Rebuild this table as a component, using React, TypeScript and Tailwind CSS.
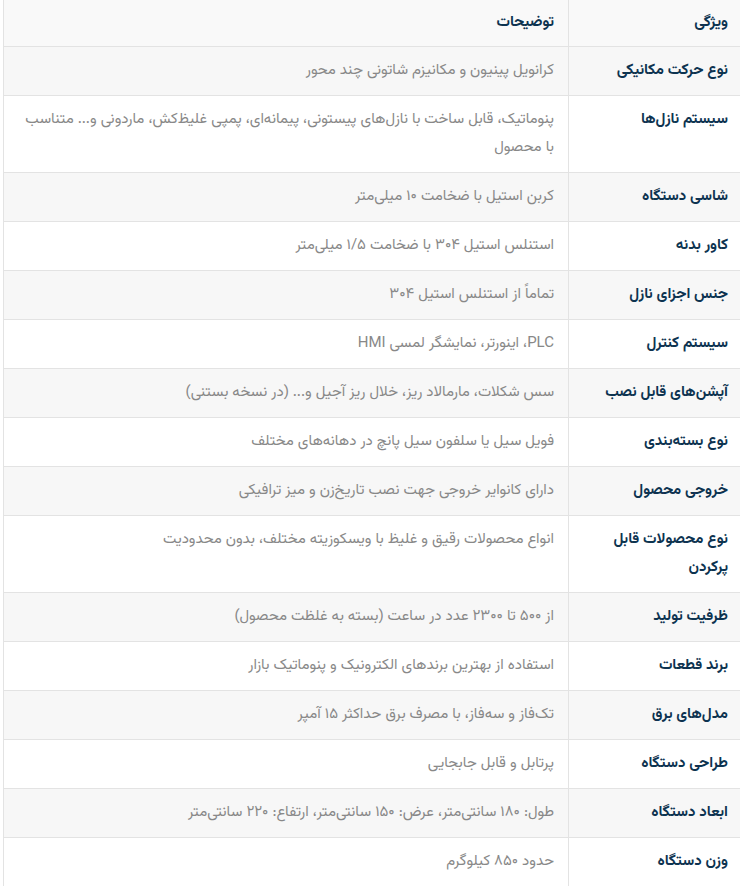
import React from "react";

const rows: [string, string][] = [
  ["نوع حرکت مکانیکی", "کرانویل پینیون و مکانیزم شاتونی چند محور"],
  ["سیستم نازل‌ها", "پنوماتیک، قابل ساخت با نازل‌های پیستونی، پیمانه‌ای، پمپی غلیظ‌کش، ماردونی و... متناسب با محصول"],
  ["شاسی دستگاه", "کربن استیل با ضخامت ۱۰ میلی‌متر"],
  ["کاور بدنه", "استنلس استیل ۳۰۴ با ضخامت ۱/۵ میلی‌متر"],
  ["جنس اجزای نازل", "تماماً از استنلس استیل ۳۰۴"],
  ["سیستم کنترل", "PLC، اینورتر، نمایشگر لمسی HMI"],
  ["آپشن‌های قابل نصب", "سس شکلات، مارمالاد ریز، خلال ریز آجیل و... (در نسخه بستنی)"],
  ["نوع بسته‌بندی", "فویل سیل یا سلفون سیل پانچ در دهانه‌های مختلف"],
  ["خروجی محصول", "دارای کانوایر خروجی جهت نصب تاریخ‌زن و میز ترافیکی"],
  ["نوع محصولات قابل پرکردن", "انواع محصولات رقیق و غلیظ با ویسکوزیته مختلف، بدون محدودیت"],
  ["ظرفیت تولید", "از ۵۰۰ تا ۲۳۰۰ عدد در ساعت (بسته به غلظت محصول)"],
  ["برند قطعات", "استفاده از بهترین برندهای الکترونیک و پنوماتیک بازار"],
  ["مدل‌های برق", "تک‌فاز و سه‌فاز، با مصرف برق حداکثر ۱۵ آمپر"],
  ["طراحی دستگاه", "پرتابل و قابل جابجایی"],
  ["ابعاد دستگاه", "طول: ۱۸۰ سانتی‌متر، عرض: ۱۵۰ سانتی‌متر، ارتفاع: ۲۲۰ سانتی‌متر"],
  ["وزن دستگاه", "حدود ۸۵۰ کیلوگرم"],
];

export default function App() {
  return (
    <div
      dir="rtl"
      className="w-[740px] h-[886px] overflow-hidden bg-white"
      style={{ fontFamily: '"Vazirmatn", "Noto Sans Arabic", "DejaVu Sans", sans-serif' }}
    >
      <div className="ml-[3px] border-l border-[#e3e3e3]">
        <div className="grid grid-cols-[172px_1fr] bg-[#f9f9f9] border-b border-[#e3e3e3]">
          <div className="pr-[12px] pl-3 py-[9px] leading-[28px] text-[15px] font-bold text-[#0d3350] border-l border-[#e3e3e3]">
            ویژگی
          </div>
          <div className="pr-[14px] pl-[12px] py-[9px] leading-[28px] text-[15px] font-bold text-[#0d3350]">
            توضیحات
          </div>
        </div>
        {rows.map(([k, v], i) => (
          <div
            key={i}
            className={
              "grid grid-cols-[172px_1fr] border-b border-[#e3e3e3] " +
              (i % 2 === 0 ? "bg-[#f7f7f7]" : "bg-white")
            }
          >
            <div className="pr-[12px] pl-3 py-[10px] leading-[28px] text-[15px] font-bold text-[#0d3350] border-l border-[#e3e3e3]">
              {k}
            </div>
            <div className="pr-[14px] pl-[12px] py-[10px] leading-[28px] text-[15px] text-[#888888]">
              {v}
            </div>
          </div>
        ))}
      </div>
    </div>
  );
}
